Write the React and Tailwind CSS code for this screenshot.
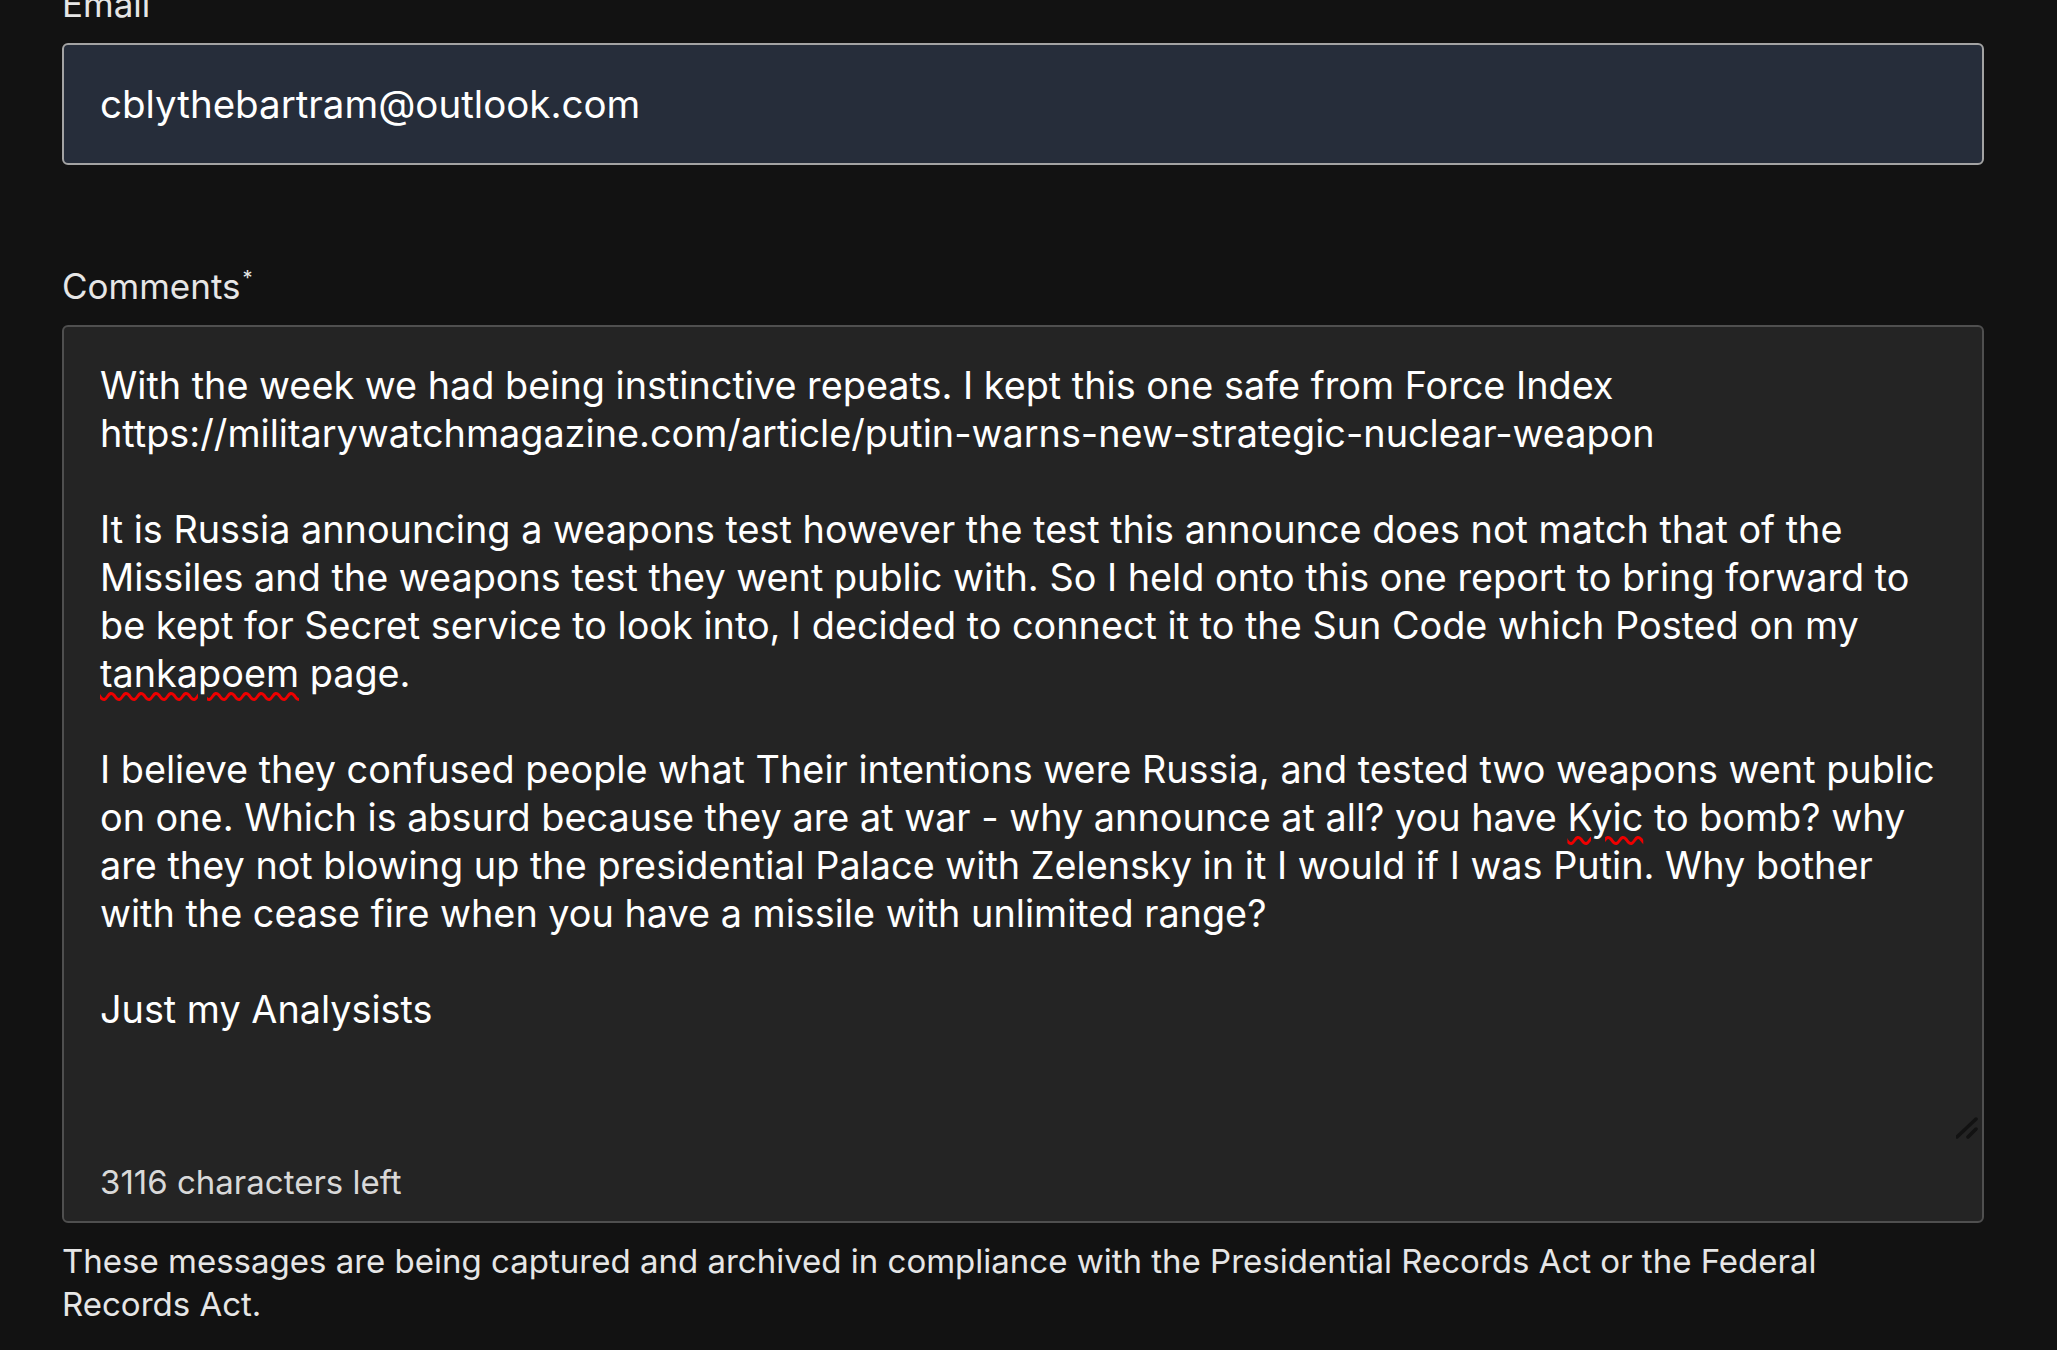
import React from 'react'

const font = { fontFamily: 'Inter, "Noto Sans", sans-serif' }

function Misspelled({ children }) {
    return (
        <span className="underline decoration-wavy decoration-[#e00] decoration-[3px] underline-offset-[5px]">{children}</span>
    )
}

const lines = [
    'With the week we had being instinctive repeats. I kept this one safe from Force Index',
    'https://militarywatchmagazine.com/article/putin-warns-new-strategic-nuclear-weapon',
    '',
    'It is Russia announcing a weapons test however the test this announce does not match that of the',
    'Missiles and the weapons test they went public with. So I held onto this one report to bring forward to',
    'be kept for Secret service to look into, I decided to connect it to the Sun Code which Posted on my',
    <><Misspelled>tankapoem</Misspelled> page.</>,
    '',
    'I believe they confused people what Their intentions were Russia, and tested two weapons went public',
    <>on one. Which is absurd because they are at war - why announce at all? you have <Misspelled>Kyic</Misspelled> to bomb? why</>,
    'are they not blowing up the presidential Palace with Zelensky in it I would if I was Putin. Why bother',
    'with the cease fire when you have a missile with unlimited range?',
    '',
    'Just my Analysists',
]

function ResizeGrip() {
    return (
        <svg className="absolute right-[4px] bottom-[2px]" width="22" height="24" viewBox="0 0 22 24">
            <path d="M1 20 L20 2" stroke="#121212" strokeWidth="3.5" strokeLinecap="round" />
            <path d="M12 20 L20 12" stroke="#121212" strokeWidth="3.5" strokeLinecap="round" />
        </svg>
    )
}

export default function App() {
    return (
        <div className="min-h-[1350px] bg-[#121212] pl-[62px] overflow-hidden" style={font}>
            <div className="w-[1922px]">
                <label className="block -mt-[17px] text-[35px] leading-[43px] text-[#e6e6e6]">Email</label>
                <div className="mt-[17px] h-[122px] rounded-md border-2 border-[#a3a3a3] bg-[#262d3a] flex items-center px-[36px]">
                    <span className="text-[38.5px] text-white pt-[2px]">cblythebartram@outlook.com</span>
                </div>

                <label className="block mt-[100px] text-[35px] leading-[43px] text-[#e6e6e6]">
                    Comments<sup className="text-[20px] ml-[2px] -top-[14px]">*</sup>
                </label>
                <div className="mt-[17px] rounded-md border-2 border-[#4f4f4f] bg-[#242424]">
                    <div className="relative h-[816px] pt-[34px] px-[36px] text-[37.8px] leading-[48px] text-white">
                        {lines.map((line, i) => (
                            <div key={i} className="h-[48px] whitespace-nowrap">{line}</div>
                        ))}
                        <ResizeGrip />
                    </div>
                    <div className="h-[78px] px-[36px] pt-[18px] text-[33px] leading-[43px] text-[#d9d9d9]">3116 characters left</div>
                </div>
                <p className="mt-[17px] text-[33px] leading-[43px] text-[#e6e6e6]">
                    These messages are being captured and archived in compliance with the Presidential Records Act or the Federal<br />Records Act.
                </p>
            </div>
        </div>
    )
}
